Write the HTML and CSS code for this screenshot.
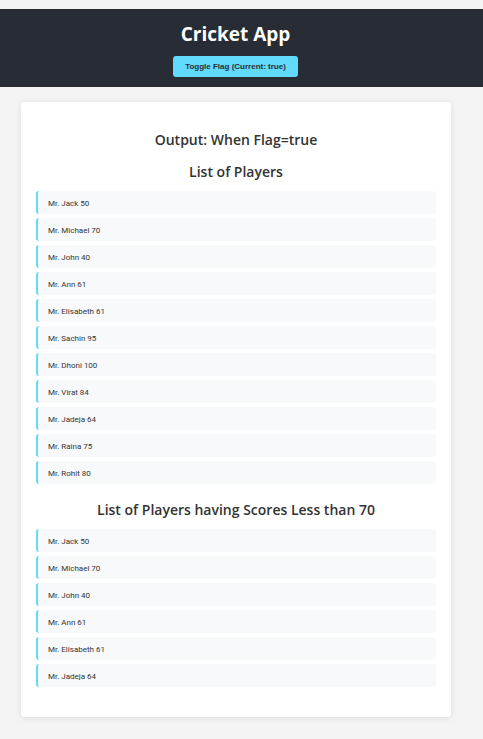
FILE: index.html
```html
<!DOCTYPE html>
<html lang="en">
<head>
<meta charset="utf-8">
<title>Cricket App</title>
<link rel="stylesheet" href="styles.css">
</head>
<body>
<header class="app-header">
  <h1>Cricket App</h1>
  <button type="button" class="toggle">Toggle Flag (Current: true)</button>
</header>
<main class="card">
  <h2>Output: When Flag=true</h2>
  <section>
    <h2>List of Players</h2>
    <ul class="players">
      <li>Mr. Jack 50</li>
      <li>Mr. Michael 70</li>
      <li>Mr. John 40</li>
      <li>Mr. Ann 61</li>
      <li>Mr. Elisabeth 61</li>
      <li>Mr. Sachin 95</li>
      <li>Mr. Dhoni 100</li>
      <li>Mr. Virat 84</li>
      <li>Mr. Jadeja 64</li>
      <li>Mr. Raina 75</li>
      <li>Mr. Rohit 80</li>
    </ul>
  </section>
  <section>
    <h2>List of Players having Scores Less than 70</h2>
    <ul class="players">
      <li>Mr. Jack 50</li>
      <li>Mr. Michael 70</li>
      <li>Mr. John 40</li>
      <li>Mr. Ann 61</li>
      <li>Mr. Elisabeth 61</li>
      <li>Mr. Jadeja 64</li>
    </ul>
  </section>
</main>
</body>
</html>
```
FILE: styles.css
```css
* {
  box-sizing: border-box;
}

body {
  margin: 0;
  padding-top: 9px;
  background: #f4f4f4;
  color: #333;
  font-family: "Segoe UI", "Open Sans", "Noto Sans", sans-serif;
}

.app-header {
  display: flex;
  flex-direction: column;
  align-items: center;
  gap: 8px;
  padding: 12px 12px 10px 0;
  background: #282c34;
}

h1 {
  margin: 0;
  color: #fff;
  font-size: 19px;
  font-weight: 700;
  line-height: 27px;
}

.toggle {
  height: 21px;
  padding: 0 12px;
  border: 0;
  border-radius: 3px;
  background: #61dafb;
  color: #282c34;
  font: bold 8px "Liberation Sans", sans-serif;
}

.card {
  margin: 15px 32px 22px 21px;
  padding: 16px 15px 14px;
  border-radius: 4px;
  background: #fff;
  box-shadow: 0 1px 6px rgba(0, 0, 0, 0.1);
}

h2 {
  margin: 12px 0 9px;
  font-size: 14px;
  font-weight: 600;
  line-height: 20px;
  text-align: center;
}

.players {
  display: grid;
  gap: 4px;
  margin: 0 0 16px;
  padding: 0;
  list-style: none;
}

.players li {
  padding: 2px 10px 0;
  border-left: 2px solid #61dafb;
  border-radius: 3px;
  background: #f8f9fb;
  font-family: "Segoe UI", Roboto, sans-serif;
  font-size: 8px;
  line-height: 21px;
}
```
